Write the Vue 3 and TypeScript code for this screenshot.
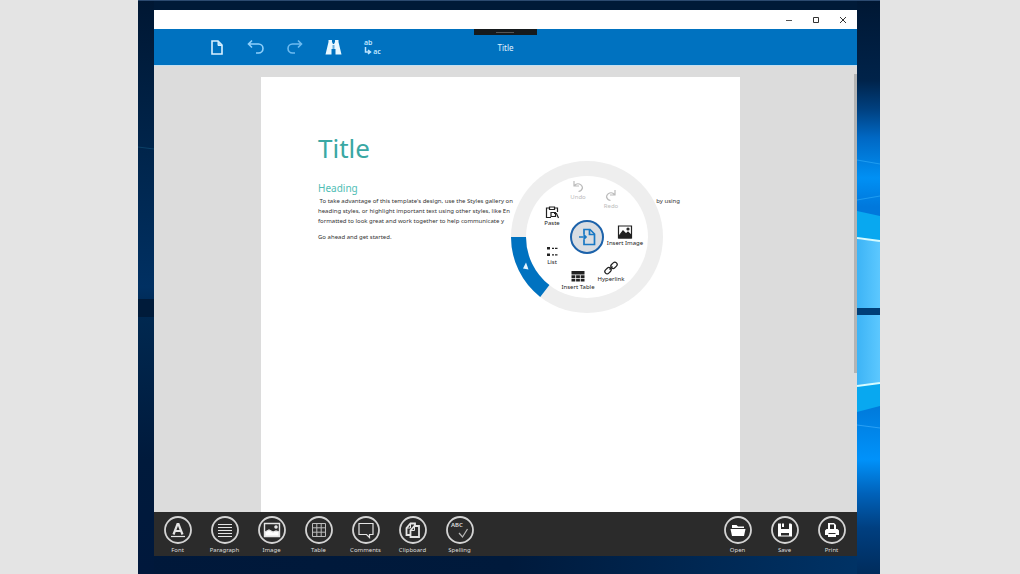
<script setup lang="ts">
import { ref } from 'vue'

interface Command {
  id: string
  label: string
}

interface RadialCommand extends Command {
  x: number
  y: number
  disabled?: boolean
}

const title = ref('Title')

const editCommands: Command[] = [
  { id: 'font', label: 'Font' },
  { id: 'paragraph', label: 'Paragraph' },
  { id: 'image', label: 'Image' },
  { id: 'table', label: 'Table' },
  { id: 'comments', label: 'Comments' },
  { id: 'clipboard', label: 'Clipboard' },
  { id: 'spelling', label: 'Spelling' },
]

const fileCommands: Command[] = [
  { id: 'open', label: 'Open' },
  { id: 'save', label: 'Save' },
  { id: 'print', label: 'Print' },
]

// x and y give the centre of each command's icon inside the dial
const radialCommands: RadialCommand[] = [
  { id: 'undo', label: 'Undo', x: 67, y: 25, disabled: true },
  { id: 'redo', label: 'Redo', x: 100, y: 34, disabled: true },
  { id: 'insert-image', label: 'Insert Image', x: 114, y: 71 },
  { id: 'hyperlink', label: 'Hyperlink', x: 100, y: 107 },
  { id: 'insert-table', label: 'Insert Table', x: 67, y: 115 },
  { id: 'list', label: 'List', x: 41, y: 90 },
  { id: 'paste', label: 'Paste', x: 41, y: 51 },
]
</script>

<template>
  <div class="screen">
    <div class="desktop">
      <svg class="wall wall-left" viewBox="0 0 16 574" preserveAspectRatio="none" aria-hidden="true">
        <defs>
          <linearGradient id="leftTone" x1="0" y1="0" x2="0" y2="1">
            <stop offset="0" stop-color="#001733" />
            <stop offset="0.25" stop-color="#00244a" />
            <stop offset="0.5" stop-color="#003062" />
            <stop offset="0.55" stop-color="#002850" />
            <stop offset="0.8" stop-color="#001a3c" />
            <stop offset="1" stop-color="#00183c" />
          </linearGradient>
        </defs>
        <rect width="16" height="574" fill="url(#leftTone)" />
        <path d="M0 147L16 149" stroke="#0b4168" />
        <rect y="299" width="16" height="18" fill="#001b3a" />
      </svg>
      <svg class="wall wall-right" viewBox="0 0 23 574" preserveAspectRatio="none" aria-hidden="true">
        <defs>
          <linearGradient id="rightTone" x1="0" y1="0" x2="0" y2="1">
            <stop offset="0" stop-color="#001733" />
            <stop offset="0.14" stop-color="#00234a" />
            <stop offset="0.19" stop-color="#00407f" />
            <stop offset="0.24" stop-color="#0068c4" />
            <stop offset="0.31" stop-color="#0090f4" />
            <stop offset="0.36" stop-color="#0078dc" />
            <stop offset="0.7" stop-color="#0078d8" />
            <stop offset="0.8" stop-color="#0092fa" />
            <stop offset="0.86" stop-color="#0062ba" />
            <stop offset="0.92" stop-color="#003f80" />
            <stop offset="1" stop-color="#002c5c" />
          </linearGradient>
          <linearGradient id="pane" x1="0" y1="0" x2="1" y2="0">
            <stop offset="0" stop-color="#3db4f6" />
            <stop offset="1" stop-color="#5cc8ff" />
          </linearGradient>
        </defs>
        <rect width="23" height="574" fill="url(#rightTone)" />
        <path d="M0 160L23 164M0 200L23 196" stroke="#1e9cf0" />
        <path d="M0 211L23 216V241L0 238z" fill="#08a8f0" />
        <path d="M0 239L23 241V308H0z" fill="url(#pane)" />
        <path d="M0 315H23V383L0 386z" fill="url(#pane)" />
        <rect y="308" width="23" height="7" fill="#003f78" />
        <path d="M0 386L23 383V406L0 412z" fill="#08a8f0" />
        <path d="M0 238L23 241M0 386L23 383" stroke="#d4fbff" stroke-width="2" />
        <path d="M0 425L23 428" stroke="#2aa0f4" />
      </svg>

      <main class="window">
        <div class="caption">
          <button type="button" aria-label="Minimize">
            <svg viewBox="0 0 8 8"><path d="M1 4.5h6" stroke="#555" /></svg>
          </button>
          <button type="button" aria-label="Maximize">
            <svg viewBox="0 0 8 8"><path d="M1.5 1.5h5v5h-5z" fill="none" stroke="#333" /></svg>
          </button>
          <button type="button" aria-label="Close">
            <svg viewBox="0 0 8 8"><path d="M1 1l6 6M7 1l-6 6" stroke="#333" /></svg>
          </button>
        </div>

        <header class="toolbar">
          <nav class="tools" aria-label="Quick actions">
            <button type="button" aria-label="New document">
              <svg viewBox="0 0 18 18">
                <path d="M4 3h6l4 4v9H4z" fill="none" stroke="#d9f1ff" stroke-width="1.600" />
                <path d="M10 3v4.500h4" fill="#b9e2fb" stroke="#d9f1ff" />
              </svg>
            </button>
            <button type="button" aria-label="Undo">
              <svg viewBox="0 0 18 18">
                <path d="M5 2.500L1.500 6 5 9.500M1.500 6h10a4.500 4.500 0 0 1 0 9H9" fill="none" stroke="#8fd0fb" stroke-width="1.600" />
              </svg>
            </button>
            <button type="button" aria-label="Redo">
              <svg viewBox="0 0 18 18">
                <path d="M12 2.500L15.500 6 12 9.500M15.500 6h-9a4.500 4.500 0 0 0 0 9H9" fill="none" stroke="#6dbbf0" stroke-width="1.600" />
              </svg>
            </button>
            <button type="button" aria-label="Find">
              <svg viewBox="0 0 18 18">
                <path d="M3.500 2h3.500v2l1 2h1l1-2V2h3.500v2l3 12.500h-6V11H6.500v5.500H.500L3.500 4z" fill="#e9f8ff" />
                <path d="M7.500 7h2v4h-2z" fill="#67aede" />
              </svg>
            </button>
            <button type="button" aria-label="Replace" class="replace">
              <span class="from">ab</span>
              <svg viewBox="0 0 8 8"><path d="M1.500 0v5h4M4 3l2.500 2L4 7" fill="none" stroke="#bfe5ff" stroke-width="1.500" /></svg>
              <span class="to">ac</span>
            </button>
          </nav>
          <h1 class="document-name">{{ title }}</h1>
          <span class="grip"></span>
        </header>

        <section class="canvas">
          <article class="paper">
            <h2>{{ title }}</h2>
            <h3>Heading</h3>
            <p class="lines">
              <span class="split">
                <span>&nbsp;To take advantage of this template's design, use the Styles gallery on</span>
                <span>by using</span>
              </span>
              <span>heading styles, or highlight important text using other styles, like En</span>
              <span>formatted to look great and work together to help communicate y</span>
            </p>
            <p>Go ahead and get started.</p>

            <div class="radial" role="menu" aria-label="Insert">
              <svg class="dial" viewBox="0 0 152 152" aria-hidden="true">
                <circle cx="76" cy="76" r="76" fill="#eee" />
                <circle cx="76" cy="76" r="61" fill="#fff" />
                <path d="M0 76A76 76 0 0 0 29.200 135.900L38.400 124.100A61 61 0 0 1 15 76z" fill="#0072c0" />
                <path d="M12 107.500l3-6 2.500 7z" fill="#e6f5ff" />
              </svg>
              <button type="button" class="hub" aria-label="Insert document">
                <svg viewBox="0 0 18 18" fill="none" stroke="#1878c4" stroke-width="1.700">
                  <path d="M6 6.500V1.500h6l4.500 4.500v10.500H6v-5" />
                  <path d="M11.500 2v4.500H16" />
                  <path d="M1 9h6.500M5.500 6.500L8 9l-2.500 2.500" />
                </svg>
              </button>
              <button
                v-for="cmd in radialCommands"
                :key="cmd.id"
                type="button"
                role="menuitem"
                class="petal"
                :disabled="cmd.disabled"
                :style="{ left: cmd.x - 20 + 'px', top: cmd.y - 8 + 'px' }"
              >
                <svg viewBox="0 0 16 16" fill="none" stroke="currentColor" stroke-width="1.200">
                  <path v-if="cmd.id === 'undo'" d="M4 3v5h5M4.500 7.500a4.500 4.500 0 0 1 8 2.500q-1 3-4 3.500" />
                  <path v-else-if="cmd.id === 'redo'" d="M12 3v5H7M11.500 7.500a4.500 4.500 0 0 0-8 2.500q1 3 4 3.500" />
                  <g v-else-if="cmd.id === 'insert-image'">
                    <path d="M1.500 2h13v12h-13z" />
                    <path d="M2 12l4-5 3 3 2-2 3 3v3H2z" fill="currentColor" />
                    <circle cx="11" cy="5" r="1" fill="currentColor" />
                  </g>
                  <g v-else-if="cmd.id === 'hyperlink'">
                    <rect x="7.500" y="3" width="7" height="4.600" rx="2.300" transform="rotate(-45 11 5.300)" />
                    <rect x="1.500" y="8.400" width="7" height="4.600" rx="2.300" transform="rotate(-45 5 10.700)" />
                    <path d="M6.500 9.500l3-3" />
                  </g>
                  <g v-else-if="cmd.id === 'insert-table'" stroke="none" fill="currentColor">
                    <path d="M1.500 3h13v3.500h-13zM1.500 7.200h3.800v2.800H1.500zM6.100 7.200h3.800v2.800H6.100zM10.700 7.200h3.800v2.800h-3.800zM1.500 10.700h3.800v2.800H1.500zM6.100 10.700h3.800v2.800H6.100zM10.700 10.700h3.800v2.800h-3.800z" />
                  </g>
                  <g v-else-if="cmd.id === 'list'" stroke="none" fill="currentColor">
                    <path d="M3 4h3v2.500H3zM3 10.500h3V13H3zM8 4.700h2v1.200H8zM11 4.700h2.500v1.200H11zM8 11.200h2v1.200H8zM11 11.200h2.500v1.200H11z" />
                  </g>
                  <g v-else>
                    <path d="M7 13.500H2.500V4h3M10.500 4h3v4M5.500 5.500v-2.500h5v2.500z" />
                    <path d="M7 8.500h4.500v4H7z" />
                    <path d="M10 9.500h2.500l2 4.500" />
                  </g>
                </svg>
                <span>{{ cmd.label }}</span>
              </button>
            </div>
          </article>
          <span class="scroll-thumb"></span>
        </section>

        <footer class="app-bar">
          <div class="group">
            <button v-for="cmd in editCommands" :key="cmd.id" type="button" class="round">
              <svg viewBox="0 0 28 28" fill="none" stroke="#e4e4e4" stroke-width="1.200">
                <circle cx="14" cy="14" r="13" stroke="#d4d4d4" stroke-width="1.800" />
                <g v-if="cmd.id === 'font'">
                  <path d="M9.500 18.500L13.500 8h1l4 10.500M11 15h6" stroke-width="2.200" />
                  <path d="M7 20.500h14" />
                </g>
                <path v-else-if="cmd.id === 'paragraph'" d="M7 8.500h14M7 11.500h14M7 14.500h14M7 17.500h14M7 20.500h14" />
                <g v-else-if="cmd.id === 'image'">
                  <path d="M6.500 7.500h15v13h-15z" stroke-width="1.400" />
                  <path d="M7 16l4-2 4 2 3-1 3 1v4H7z" fill="#fff" />
                  <circle cx="18" cy="11" r="1.200" fill="#fff" />
                </g>
                <path v-else-if="cmd.id === 'table'" d="M7.500 7.500h13v13h-13zM7.500 11.800h13M7.500 16.200h13M11.800 7.500v13M16.200 7.500v13" stroke="#bcbcbc" stroke-width="1" />
                <path v-else-if="cmd.id === 'comments'" d="M7 7.500h14v11h-3.500v3l-3-3H7z" />
                <g v-else-if="cmd.id === 'clipboard'" stroke-width="1.800">
                  <path d="M11 19H7.500v-7L11.500 7.500H16v3" />
                  <path d="M11.500 21v-6.500L15.500 10H20v11z" />
                  <path d="M7.500 12H11.500V8M11.500 14.500h4V10.500" stroke-width="1" />
                </g>
                <path v-else d="M13 17l3.500 4 5-8" stroke="#b8b8b8" />
              </svg>
              <b v-if="cmd.id === 'spelling'" class="abc" aria-hidden="true">ABC</b>
              <span>{{ cmd.label }}</span>
            </button>
          </div>
          <div class="group">
            <button v-for="cmd in fileCommands" :key="cmd.id" type="button" class="round">
              <svg viewBox="0 0 28 28" fill="#fff">
                <circle cx="14" cy="14" r="13" fill="none" stroke="#d4d4d4" stroke-width="1.800" />
                <path v-if="cmd.id === 'open'" d="M8 9h4.500l1.500 1.500h6V12H8zM6.500 13h15L20 20H8z" />
                <path v-else-if="cmd.id === 'save'" fill-rule="evenodd" d="M7 7.500h3v5.500h8V7.500h2l1 1V20.500H7zM11 7.500h2v3.500h-2zM10 17v2.500h8v-2.500z" />
                <path v-else fill-rule="evenodd" d="M10 7h6l2 2v4h1.500l1.500 1.500V19h-3v2h-8v-2H7v-4.500L8.500 13H10zM12 8.500V13h4V8.500zM10.500 17v1h7v-1z" />
              </svg>
              <span>{{ cmd.label }}</span>
            </button>
          </div>
        </footer>
      </main>
    </div>
  </div>
</template>

<style>
body {
  margin: 0;
}
</style>

<style scoped>
.screen {
  box-sizing: border-box;
  min-height: 100vh;
  padding: 0 140px 0 138px;
  display: flex;
  background: #e4e4e4;
  font-family: "Noto Sans", "Open Sans", sans-serif;
}

.desktop {
  position: relative;
  box-sizing: border-box;
  flex: 1;
  display: flex;
  padding: 10px 23px 18px 16px;
  background:
    linear-gradient(#001a38, #001a38) top / 100% 10px no-repeat,
    linear-gradient(90deg, #00183a, #001a3c 50%, #003468);
}

.desktop::before {
  content: "";
  position: absolute;
  inset: 0 0 auto;
  height: 1px;
  z-index: 1;
  background: #2c4a70;
}

.wall {
  position: absolute;
  top: 0;
  height: 100%;
}

.wall-left {
  left: 0;
  width: 16px;
}

.wall-right {
  right: 0;
  width: 23px;
}

button {
  margin: 0;
  padding: 0;
  border: 0;
  background: none;
  color: inherit;
  font: inherit;
}

.window {
  position: relative;
  flex: 1;
  display: flex;
  flex-direction: column;
}

.caption {
  display: flex;
  justify-content: flex-end;
  height: 19px;
  padding-right: 1px;
  background: #fff;
}

.caption button {
  display: grid;
  place-items: center;
  width: 27px;
}

.caption svg {
  width: 8px;
  height: 8px;
}

.toolbar {
  position: relative;
  display: grid;
  grid-template-columns: 1fr auto 1fr;
  align-items: center;
  height: 36px;
  background: #0072c0;
  color: #e2f3ff;
}

.tools {
  display: flex;
  gap: 21px;
  padding-left: 54px;
}

.tools button {
  width: 18px;
  height: 18px;
}

.tools svg {
  display: block;
}

.document-name {
  margin: 0;
  padding-top: 1px;
  font-size: 8px;
  line-height: 12px;
  font-weight: 400;
}

.replace {
  display: grid;
  grid-template-columns: 8px 10px;
  grid-template-rows: 9px 9px;
  color: #bfe5ff;
  font-size: 7px;
  line-height: 9px;
  font-weight: 600;
}

.replace .from {
  grid-column: 1 / 3;
  text-align: left;
}

.grip {
  position: absolute;
  top: 0;
  left: 50%;
  width: 63px;
  height: 6px;
  margin-left: -32px;
  background: linear-gradient(#555, #555) center / 18px 1px no-repeat #161a1c;
}

.canvas {
  position: relative;
  flex: 1;
  display: flex;
  padding: 12px 117px 0 107px;
  background: #dcdcdc;
  box-shadow: inset 0 1px #c4dff0;
}

.paper {
  position: relative;
  flex: 1;
  padding: 52px 60px 0 57px;
  background: #fff;
  color: #333;
  font-size: 6px;
  line-height: 10px;
}

.paper h2 {
  margin: 0;
  color: #3aa8a4;
  font-size: 26px;
  line-height: 38px;
  font-weight: 400;
}

.paper h3 {
  margin: 14px 0 0;
  color: #4fbdb4;
  font-size: 10px;
  line-height: 15px;
  font-weight: 400;
}

.paper p {
  margin: 0 0 6px;
}

.lines > span {
  display: block;
  white-space: nowrap;
}

.lines > .split {
  display: flex;
  justify-content: space-between;
}

.radial {
  position: absolute;
  left: 250px;
  top: 84px;
  width: 152px;
  height: 152px;
}

.dial {
  display: block;
  width: 100%;
  height: 100%;
}

.hub {
  position: absolute;
  inset: 59px;
  display: grid;
  place-items: center;
  border: 2px solid #1c62aa;
  border-radius: 50%;
  background: #d9dde2;
}

.hub svg {
  width: 18px;
  height: 18px;
}

.petal {
  position: absolute;
  width: 40px;
  display: flex;
  flex-direction: column;
  align-items: center;
  color: #222;
  line-height: 7px;
  white-space: nowrap;
}

.petal:disabled {
  color: #bbb;
}

.petal svg {
  width: 16px;
  height: 16px;
}

.scroll-thumb {
  position: absolute;
  right: 0;
  top: 9px;
  width: 3px;
  height: 67%;
  background: #b4b4b4;
}

.app-bar {
  display: flex;
  justify-content: space-between;
  height: 44px;
  padding-right: 2px;
  background: #2b2b2b;
  color: #ddd;
}

.group {
  display: flex;
}

.round {
  position: relative;
  display: flex;
  flex-direction: column;
  align-items: center;
  width: 47px;
  padding-top: 4px;
  font-size: 6px;
  line-height: 12px;
}

.round svg {
  width: 28px;
  height: 28px;
}

.abc {
  position: absolute;
  top: 7px;
  left: 15px;
  font-size: 6px;
  font-weight: 600;
}
</style>
